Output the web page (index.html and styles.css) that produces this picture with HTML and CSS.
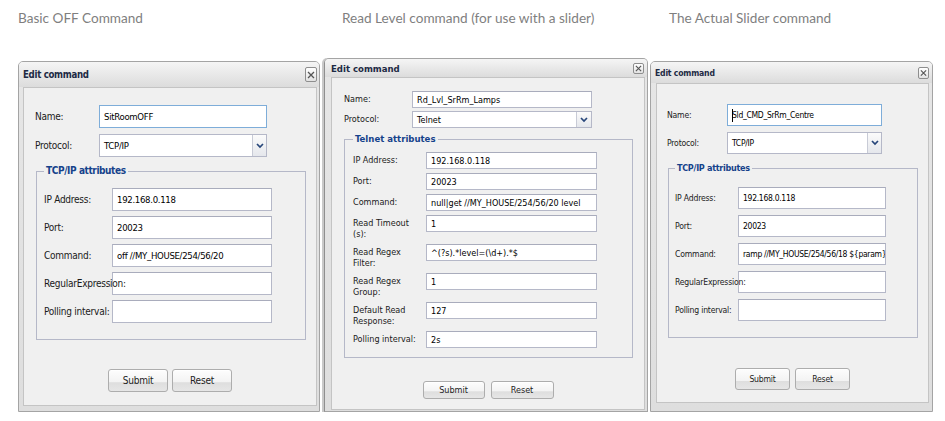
FILE: index.html
```html
<!DOCTYPE html>
<html lang="en">
<head>
<meta charset="utf-8">
<title>Edit command dialogs</title>
<link rel="stylesheet" href="styles.css">
</head>
<body>
<div class="page">

  <section class="col col-1">
    <h2 class="cap">Basic OFF Command</h2>
    <div class="win w1">
      <div class="win-head">
        <span class="win-title">Edit command</span>
        <span class="win-close"><svg viewBox="0 0 8 8" width="8" height="8"><path d="M1 1L7 7M7 1L1 7" /></svg></span>
      </div>
      <div class="win-body">
        <div class="row top"><span class="lab">Name:</span><div class="field focus">SitRoomOFF</div></div>
        <div class="row top gap"><span class="lab">Protocol:</span>
          <div class="select"><span class="sel-val">TCP/IP</span><span class="sel-btn"><svg viewBox="0 0 8 6" width="8" height="6"><path d="M1 1L4 4L7 1" /></svg></span></div>
        </div>
        <fieldset class="fs">
          <legend>TCP/IP attributes</legend>
          <div class="rows">
            <div class="row"><span class="lab">IP Address:</span><div class="field">192.168.0.118</div></div>
            <div class="row"><span class="lab">Port:</span><div class="field">20023</div></div>
            <div class="row"><span class="lab">Command:</span><div class="field">off //MY_HOUSE/254/56/20</div></div>
            <div class="row"><span class="lab">RegularExpression:</span><div class="field"></div></div>
            <div class="row"><span class="lab">Polling interval:</span><div class="field"></div></div>
          </div>
        </fieldset>
        <div class="btns"><button class="btn">Submit</button><button class="btn">Reset</button></div>
      </div>
    </div>
  </section>

  <section class="col col-2">
    <h2 class="cap">Read Level command (for use with a slider)</h2>
    <div class="win w2">
      <div class="win-head">
        <span class="win-title">Edit command</span>
        <span class="win-close"><svg viewBox="0 0 8 8" width="7" height="7"><path d="M1 1L7 7M7 1L1 7" /></svg></span>
      </div>
      <div class="win-body">
        <div class="row top"><span class="lab">Name:</span><div class="field">Rd_Lvl_SrRm_Lamps</div></div>
        <div class="row top gap"><span class="lab">Protocol:</span>
          <div class="select"><span class="sel-val">Telnet</span><span class="sel-btn"><svg viewBox="0 0 8 6" width="8" height="6"><path d="M1 1L4 4L7 1" /></svg></span></div>
        </div>
        <fieldset class="fs">
          <legend>Telnet attributes</legend>
          <div class="rows">
            <div class="row"><span class="lab">IP Address:</span><div class="field">192.168.0.118</div></div>
            <div class="row"><span class="lab">Port:</span><div class="field">20023</div></div>
            <div class="row"><span class="lab">Command:</span><div class="field">null|get //MY_HOUSE/254/56/20 level</div></div>
            <div class="row"><span class="lab">Read Timeout<br>(s):</span><div class="field">1</div></div>
            <div class="row"><span class="lab">Read Regex<br>Filter:</span><div class="field">^(?s).*level=(\d+).*$</div></div>
            <div class="row"><span class="lab">Read Regex<br>Group:</span><div class="field">1</div></div>
            <div class="row"><span class="lab">Default Read<br>Response:</span><div class="field">127</div></div>
            <div class="row"><span class="lab">Polling interval:</span><div class="field">2s</div></div>
          </div>
        </fieldset>
        <div class="btns"><button class="btn">Submit</button><button class="btn">Reset</button></div>
      </div>
    </div>
  </section>

  <section class="col col-3">
    <h2 class="cap">The Actual Slider command</h2>
    <div class="win w3">
      <div class="win-head">
        <span class="win-title">Edit command</span>
        <span class="win-close"><svg viewBox="0 0 8 8" width="7" height="8"><path d="M1 1L7 7M7 1L1 7" /></svg></span>
      </div>
      <div class="win-body">
        <div class="row top"><span class="lab">Name:</span><div class="field focus"><span class="caret"></span>Sld_CMD_SrRm_Centre</div></div>
        <div class="row top gap"><span class="lab">Protocol:</span>
          <div class="select"><span class="sel-val">TCP/IP</span><span class="sel-btn"><svg viewBox="0 0 8 6" width="8" height="6"><path d="M1 1L4 4L7 1" /></svg></span></div>
        </div>
        <fieldset class="fs">
          <legend>TCP/IP attributes</legend>
          <div class="rows">
            <div class="row"><span class="lab">IP Address:</span><div class="field">192.168.0.118</div></div>
            <div class="row"><span class="lab">Port:</span><div class="field">20023</div></div>
            <div class="row"><span class="lab">Command:</span><div class="field">ramp //MY_HOUSE/254/56/18 ${param}</div></div>
            <div class="row"><span class="lab">RegularExpression:</span><div class="field"></div></div>
            <div class="row"><span class="lab">Polling interval:</span><div class="field"></div></div>
          </div>
        </fieldset>
        <div class="btns"><button class="btn">Submit</button><button class="btn">Reset</button></div>
      </div>
    </div>
  </section>

</div>
</body>
</html>
```
FILE: styles.css
```css
* { box-sizing: border-box; }

body {
  margin: 0;
  background: #ffffff;
}

.page {
  display: flex;
  align-items: flex-start;
  padding-left: 18px;
}

.col { display: flex; flex-direction: column; flex: none; }
.col-1 { width: 302px; }
.col-2 { width: 324px; margin-left: 4px; }
.col-3 { width: 283px; margin-left: 2px; }

.cap {
  margin: 0;
  padding-top: 10px;
  height: 26px;
  font: normal 13.6px/16px Lato, "Open Sans", sans-serif;
  color: #7f7f7f;
  white-space: nowrap;
}
.col-2 .cap { padding-left: 18px; }
.col-3 .cap { padding-left: 19px; }

/* window */
.win {
  margin-top: 35px;
  border: 1px solid #a4a4a4;
  border-radius: 5px 5px 0 0;
  background: linear-gradient(#e6e6e6, #dedede);
  color: #1a1a1a;
  font-family: "DejaVu Sans Condensed", "DejaVu Sans", sans-serif;
  font-stretch: condensed;
}
.col-2 .win { margin-top: 32px; border-left-color: #8f8f8f; box-shadow: -2px 0 0 #c9c9c9; }

.win-head {
  display: flex;
  align-items: center;
  justify-content: space-between;
  border-radius: 4px 4px 0 0;
  background: linear-gradient(#f5f5f5, #dcdcdc);
}
.win-title {
  font-weight: bold;
  color: #1d2a44;
  white-space: nowrap;
}
.win-close {
  display: flex;
  align-items: center;
  justify-content: center;
  border: 1px solid #8e8e8e;
  border-radius: 2px;
  background: linear-gradient(#ffffff, #e2e2e2);
}
.win-close path { stroke: #555; stroke-width: 1.3; fill: none; }

.win-body {
  display: flex;
  flex-direction: column;
  border: 1px solid #c4c4c4;
  background: #f0f0f0;
}

.row { display: flex; align-items: flex-start; }
.lab { flex: none; white-space: nowrap; position: relative; z-index: 1; }
.top .lab { width: var(--lab); }
.top .field, .select { width: var(--inw); }
.fs .lab { width: var(--fs-lab); }
.fs .field { width: var(--fs-inw); }

.field {
  flex: none;
  display: flex;
  align-items: center;
  height: var(--fh);
  border: 1px solid #b5b8c8;
  border-top-color: #a9acbc;
  background: #ffffff;
  color: #000;
  padding-left: 4px;
  white-space: nowrap;
  overflow: hidden;
}
.field.focus { border-color: #7eadd9; }
.caret {
  display: inline-block;
  width: 1px;
  height: 13px;
  background: #000;
  margin-right: -1px;
}

.select {
  flex: none;
  display: flex;
  height: var(--fh);
  border: 1px solid #b5b8c8;
  background: #ffffff;
  color: #000;
}
.sel-val { flex: 1; display: flex; align-items: center; padding-left: 4px; }
.sel-btn {
  flex: none;
  display: flex;
  align-items: center;
  justify-content: center;
  border-left: 1px solid #c8cbd6;
  background: linear-gradient(#fbfbfb, #e5e7ec);
}
.sel-btn path { stroke: #27467a; stroke-width: 1.7; fill: none; }

.fs {
  margin: 0;
  min-width: 0;
  border: 1px solid #b5b8c8;
}
.fs legend {
  padding: 0 2px;
  font-weight: bold;
  color: #15428b;
  white-space: nowrap;
}
.rows { display: flex; flex-direction: column; }

.btns { display: flex; justify-content: center; }
.btn {
  padding: 0;
  border: 1px solid #adadad;
  border-radius: 3px;
  background: linear-gradient(#fdfdfd 0%, #f3f3f3 58%, #dedede 60%, #e6e6e6 100%);
  box-shadow: inset 0 1px 0 #ffffff;
  color: #222;
  font-family: inherit;
  font-stretch: inherit;
  font-size: inherit;
  letter-spacing: inherit;
}

/* ---------- window 1 ---------- */
.w1 { --lab: 64px; --inw: 168px; --fh: 23px; --fs-lab: 68px; --fs-inw: 160px; font-size: 10px; }
.w1 .win-head { height: 25px; padding: 0 2px 0 4px; }
.w1 .win-title { font-size: 9.6px; letter-spacing: -0.3px; }
.w1 .win-close { width: 12px; height: 15px; }
.w1 .win-body { margin: 0 2px 5px 4px; padding: 17px 0 13px 11px; }
.w1 .lab { font-size: 10px; letter-spacing: -0.25px; line-height: 23px; }
.w1 .field, .w1 .sel-val { font-size: 9.5px; letter-spacing: -0.3px; }
.w1 .gap { margin-top: 6px; }
.w1 .sel-btn { width: 14px; }
.w1 .fs { margin: 7px 0 0 1px; width: 270px; padding: 10px 0 16px 7px; }
.w1 .fs legend { font-size: 10px; letter-spacing: -0.4px; line-height: 14px; }
.w1 .rows { gap: 5px; }
.w1 .btns { gap: 4px; margin-top: 29px; margin-left: -11px; }
.w1 .btn { width: 60px; height: 23px; font-size: 10px; letter-spacing: -0.2px; }

/* ---------- window 2 ---------- */
.w2 {
  --lab: 68px; --inw: 180px; --fh: 17px; --fs-lab: 73px; --fs-inw: 171px;
  font-size: 9px;
}
.w2 .win-head { height: 18px; padding: 0 3px 0 6px; }
.w2 .win-title { font-size: 9.5px; }
.w2 .win-close { width: 11px; height: 11px; }
.w2 .win-body { margin: 0 2px 1px 6px; padding: 13px 0 10px 12px; }
.w2 .lab { line-height: 11px; padding-top: 3px; }
.w2 .gap { margin-top: 3px; }
.w2 .sel-btn { width: 15px; }
.w2 .fs { margin: 5px 0 0 0; width: 289px; padding: 7px 0 9px 8px; }
.w2 .fs legend { font-size: 9.5px; line-height: 12px; }
.w2 .rows { gap: 4px; }
.w2 .btns { gap: 6px; margin-top: 23px; margin-left: -12px; }
.w2 .btn { width: 62px; height: 18px; }
.w2 .btn + .btn { width: 63px; }

/* ---------- window 3 ---------- */
.w3 { --lab: 60px; --inw: 155px; --fh: 22px; --fs-lab: 63px; --fs-inw: 148px; font-size: 8.5px; }
.w3 .win-head { height: 21px; padding: 0 3px 0 4px; }
.w3 .win-title { font-size: 8.6px; letter-spacing: -0.2px; }
.w3 .win-close { width: 11px; height: 12px; }
.w3 .win-body { margin: 0 3px 8px 5px; padding: 20px 0 12px 10px; }
.w3 .lab { font-size: 8.6px; letter-spacing: -0.2px; line-height: 22px; }
.w3 .field, .w3 .sel-val { font-size: 8.5px; letter-spacing: -0.3px; }
.w3 .gap { margin-top: 6px; }
.w3 .sel-btn { width: 14px; }
.w3 .fs { margin: 7px 0 0 1px; width: 250px; padding: 12px 0 16px 6px; }
.w3 .fs legend { font-size: 9px; letter-spacing: -0.3px; line-height: 14px; }
.w3 .rows { gap: 6px; }
.w3 .btns { gap: 5px; margin-top: 30px; margin-left: -10px; }
.w3 .btn { width: 55px; height: 22px; font-size: 8.6px; letter-spacing: -0.2px; }
```
